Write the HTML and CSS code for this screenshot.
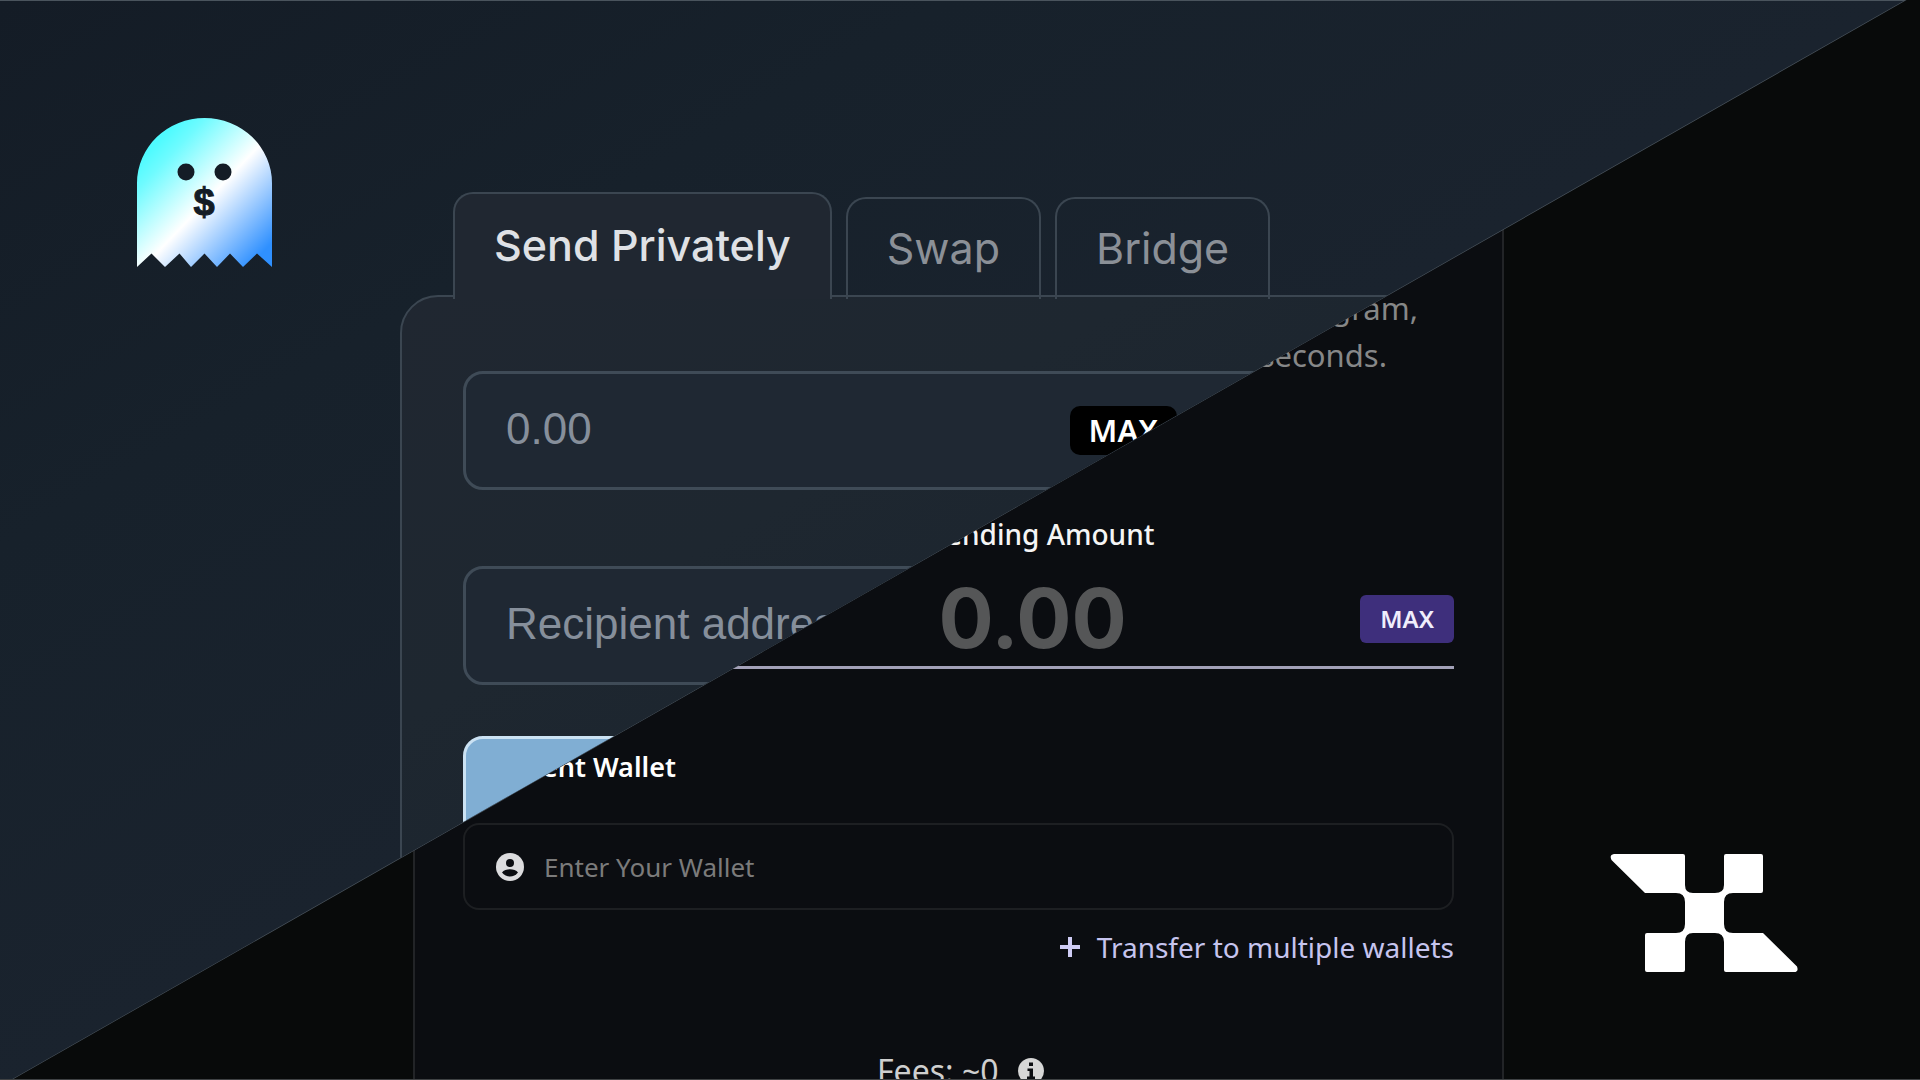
FILE: index.html
```html
<!DOCTYPE html>
<html lang="en">
	<head>
		<meta charset="utf-8">
		<meta name="viewport" content="width=device-width, initial-scale=1.0">
		<title>Send Privately</title>
		<link rel="stylesheet" href="styles.css">
	</head>
	<body>
		<main class="split">
			<!-- dark half -->
			<section class="dark">
				<div class="card">
					<p class="intro">
						<span class="intro-first">Telegram,</span>
						<span class="intro-last">seconds.</span>
					</p>
					<label class="amount-label" for="amount">Sending Amount</label>
					<div class="amount">
						<input type="text" id="amount" placeholder="0.00">
						<button type="button" class="max">MAX</button>
					</div>
					<label class="wallet-label" for="wallet">Recipient Wallet</label>
					<div class="wallet">
						<svg class="user" viewBox="0 0 28 28">
							<circle cx="14" cy="14" r="14" fill="#dcdcde"/>
							<circle cx="14" cy="10" r="4" fill="#0b0d11"/>
							<path d="M6 19.5C7.500 16.800 11 16.200 14 16.200s6.500.6 8 3.300c-2 2.900-5 4-8 4s-6-1.100-8-4z" fill="#0b0d11"/>
						</svg>
						<input type="text" id="wallet" placeholder="Enter Your Wallet">
					</div>
					<a class="multiple" href="#">
						<svg class="plus" viewBox="0 0 22 22"><path d="M11 1v20M1 11h20" stroke="#cfccf5" stroke-width="4"/></svg>
						Transfer to multiple wallets
					</a>
					<div class="fees">
						Fees: ~0
						<svg class="info" viewBox="0 0 26 26">
							<circle cx="13" cy="13" r="13" fill="#d6d6d6"/>
							<path d="M11 4.500h4v3.500h-4zM9.500 10.500H15v8h2V21H9v-2.500h2.500V13h-2z" fill="#0b0d11"/>
						</svg>
					</div>
				</div>
				<svg class="x-logo" viewBox="0 0 188 118">
					<path fill="#fff" d="M4 0H73Q75 0 75 2V31Q75 39 83 39H105Q114 39 114 31V2Q114 0 116 0H151Q153 0 153 2V37Q153 39 151 39H123Q114 39 114 48V70Q114 79 123 79H153L187 112.500Q189 118 184 118H116Q114 118 114 116V88Q114 79 105 79H83Q75 79 75 88V116Q75 118 73 118H37Q35 118 35 116V81Q35 79 37 79H66Q75 79 75 70V48Q75 39 66 39H35L1.500 6Q-1 1 4 0Z"/>
				</svg>
			</section>

			<!-- blue half, cut along the diagonal -->
			<div class="edge">
				<section class="blue">
					<svg class="ghost" viewBox="0 0 135 149">
						<defs>
							<linearGradient id="ghost-fill" gradientUnits="userSpaceOnUse" x1="15" y1="30" x2="125" y2="135">
								<stop offset="0" stop-color="#4ffbff"/>
								<stop offset=".12" stop-color="#6ffbff"/>
								<stop offset=".5" stop-color="#fff"/>
								<stop offset="1" stop-color="#2f90ff"/>
							</linearGradient>
						</defs>
						<path fill="url(#ghost-fill)" d="M0 149V65A67.500 65 0 0 1 135 65V149L120 135.500 106 149 93 135.500 80 149 67.500 135.500 54 149 42.500 135.500 28 149 14.500 135.500Z"/>
						<circle cx="49" cy="54" r="8.500" fill="#141c26"/>
						<circle cx="86" cy="54" r="8.500" fill="#141c26"/>
						<text class="dollar" x="67" y="97" text-anchor="middle">$</text>
					</svg>
					<div class="swap">
						<nav class="tabs">
							<button type="button" class="tab active">Send Privately</button>
							<button type="button" class="tab">Swap</button>
							<button type="button" class="tab">Bridge</button>
						</nav>
						<div class="panel">
							<div class="field">
								<input type="text" placeholder="0.00" aria-label="Amount">
								<button type="button" class="max-black">MAX</button>
							</div>
							<div class="field">
								<input type="text" placeholder="Recipient address" aria-label="Recipient address">
							</div>
							<button type="button" class="submit" aria-label="Send"></button>
						</div>
					</div>
				</section>
			</div>
		</main>
	</body>
</html>
```

FILE: styles.css
```css
* {
	box-sizing: border-box;
	margin: 0;
	padding: 0;
}
body {
	background-color: #080a0a;
	font-family: "Noto Sans", sans-serif;
}
input, button {
	border: none;
	outline: none;
	background: none;
	font-family: inherit;
}
input {
	flex: 1;
	min-width: 0;
}
button {
	cursor: pointer;
}
svg {
	display: block;
	flex: none;
}

/* both halves share one grid cell */
.split {
	display: grid;
	grid-template-columns: minmax(0, 1fr);
	grid-template-rows: minmax(0, 1fr);
	height: 100vh;
	overflow: hidden;
	border-bottom: 1px solid #3f4244;
}
.dark, .edge {
	grid-area: 1 / 1;
	min-height: 0;
}

/* dark half */
.dark {
	display: grid;
	grid-template-columns: 413px minmax(0, 1fr) 416px;
	grid-template-rows: minmax(0, 1fr);
}
.card {
	grid-column: 2;
	display: flex;
	flex-direction: column;
	padding: 285px 48px 0;
	border-left: 2px solid #222427;
	border-right: 2px solid #222427;
	background-color: #0b0d11;
}
.intro {
	display: flex;
	flex-direction: column;
	align-items: flex-end;
	font-size: 31px;
	line-height: 47px;
	color: #868788;
}
.intro-first {
	padding-right: 36px;
}
.intro-last {
	padding-right: 67px;
}
.amount-label {
	margin-top: 136px;
	padding: 0 74px 0 242px;
	text-align: center;
	font-size: 28px;
	font-weight: 500;
	line-height: 38px;
	color: #f5f5f5;
}
.amount {
	display: flex;
	flex: none;
	align-items: center;
	height: 116px;
	padding: 18px 0 0 242px;
	border-bottom: 3px solid #a3a1b8;
}
.amount input {
	font-family: Inter, sans-serif;
	font-size: 82px;
	font-weight: 700;
	text-align: center;
}
.amount input::placeholder {
	color: #555657;
}
.max {
	padding: 0 20px;
	border-radius: 6px;
	background-color: #3e2f7c;
	color: #f0eefc;
	font-size: 24px;
	font-weight: 600;
	line-height: 48px;
}
.wallet-label {
	margin-top: 79px;
	font-size: 27px;
	font-weight: 600;
	line-height: 38px;
	color: #fff;
}
.wallet {
	display: flex;
	flex: none;
	align-items: center;
	gap: 20px;
	height: 87px;
	margin-top: 37px;
	padding: 0 31px;
	border: 2px solid #1d1f22;
	border-radius: 16px;
}
.user {
	width: 28px;
}
.wallet input {
	font-size: 26px;
}
.wallet input::placeholder {
	color: #7b7b7b;
}
.multiple {
	display: flex;
	align-items: center;
	align-self: flex-end;
	gap: 16px;
	margin-top: 18px;
	font-size: 28px;
	line-height: 38px;
	color: #c6c4ee;
	text-decoration: none;
}
.plus {
	width: 22px;
}
.fees {
	display: flex;
	align-items: center;
	gap: 19px;
	margin-top: 84px;
	padding-left: 414px;
	font-size: 32px;
	line-height: 42px;
	color: #cfcfcf;
}
.info {
	width: 26px;
}
.x-logo {
	align-self: end;
	width: 188px;
	margin: 0 0 107px 106px;
}

/* blue half: .edge shows as a hairline along the cut */
.edge {
	display: grid;
	grid-template-columns: minmax(0, 1fr);
	grid-template-rows: minmax(0, 1fr);
	background-color: #4a545d;
	clip-path: polygon(0 0, 99.3% 0, 0.7% 100%, 0 100%);
}
.blue {
	display: grid;
	grid-template-columns: 400px minmax(0, 1fr);
	grid-template-rows: minmax(0, 1fr);
	min-height: 0;
	margin-top: 1px;
	background: linear-gradient(150deg, #141c26 0%, #17212b 25%, #1a232e 50%);
	clip-path: polygon(0 0, calc(99.3% - 3px) 0, calc(0.7% - 1px) 100%, 0 100%);
}
.ghost {
	width: 135px;
	margin: 117px 0 0 137px;
}
.dollar {
	font-family: "Liberation Sans", sans-serif;
	font-size: 38px;
	font-weight: bold;
	fill: #141c26;
	stroke: #141c26;
}
.swap {
	display: flex;
	flex-direction: column;
	padding: 191px 416px 0 0;
}
.tabs {
	display: flex;
	flex: none;
	align-items: flex-end;
	gap: 14px;
	z-index: 1;
	margin: 0 0 -4px 53px;
}
.tab {
	height: 102px;
	padding: 0 39px 2px;
	border: 2px solid #3b4651;
	border-bottom: none;
	border-radius: 20px 20px 0 0;
	font-family: Inter, sans-serif;
	font-size: 43px;
	color: #8b9097;
}
.tab.active {
	height: 107px;
	padding-bottom: 4px;
	background-color: #202731;
	color: #dfe1e5;
	font-weight: 500;
}
.panel {
	flex: auto;
	display: flex;
	flex-direction: column;
	padding: 74px 48px 0 61px;
	border: 2px solid #3b4651;
	border-radius: 38px 38px 0 0;
	background: linear-gradient(150deg, #202731 0%, #1e2730 30%, #1b242e 60%);
}
.field {
	display: flex;
	flex: none;
	align-items: center;
	height: 119px;
	margin-bottom: 76px;
	padding: 0 274px 0 40px;
	border: 3px solid #3f4b57;
	border-radius: 20px;
	background-color: #1f2833;
}
.field + .field {
	margin-bottom: 51px;
}
.field input {
	padding-bottom: 4px;
	font-family: "Liberation Sans", sans-serif;
	font-size: 44px;
}
.field input::placeholder {
	color: #868f9b;
}
.max-black {
	padding: 0 19px;
	border-radius: 10px;
	background-color: #000;
	color: #fff;
	font-size: 31px;
	font-weight: 600;
	line-height: 49px;
}
.submit {
	flex: none;
	height: 120px;
	border: 3px solid #cbe2f3;
	border-radius: 20px;
	background-color: #80aed3;
}
```
